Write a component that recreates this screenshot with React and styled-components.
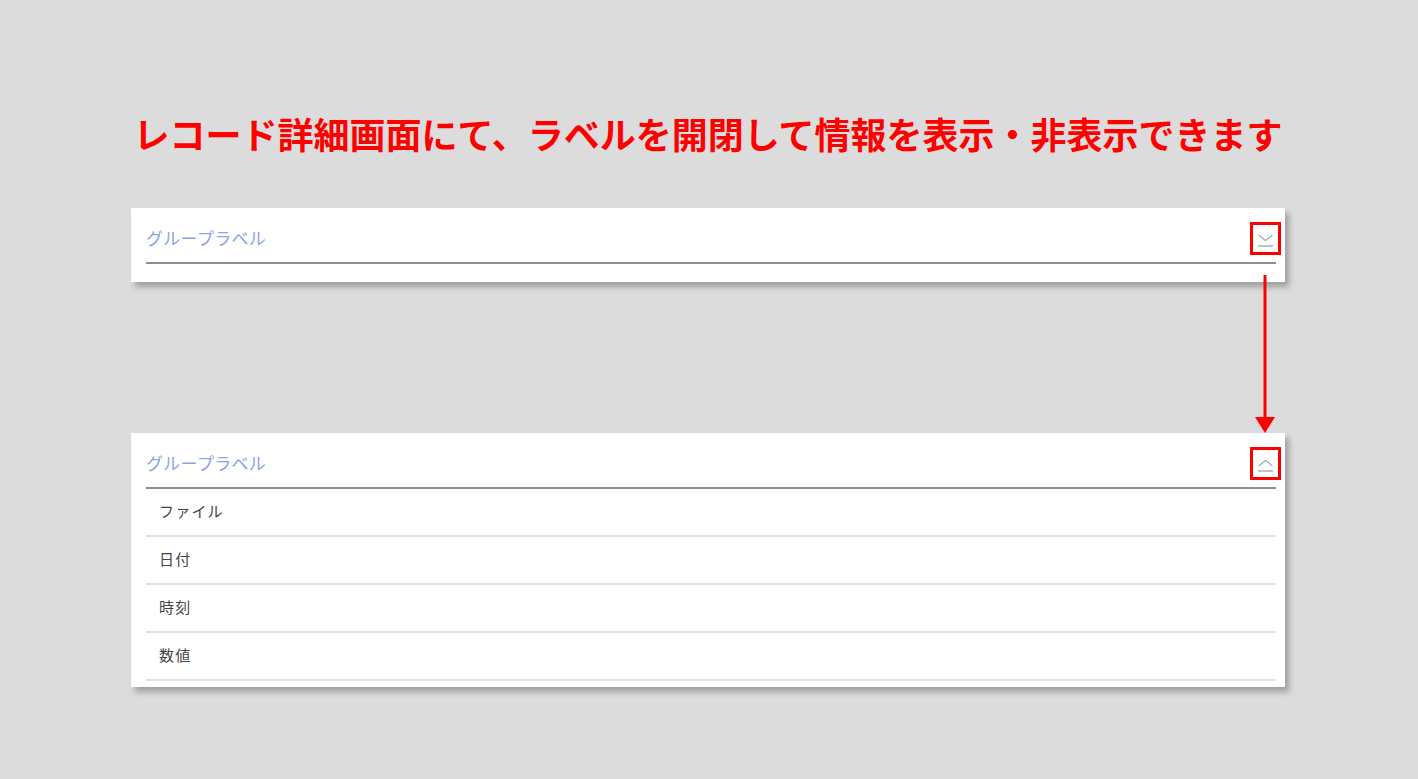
import React from 'react'
import styled, { createGlobalStyle } from 'styled-components'

const GlobalStyle = createGlobalStyle`
    html, body {
        margin: 0;
        padding: 0;
        background: #dcdcdc;
        font-family: "Noto Sans CJK JP", "Noto Sans", sans-serif;
    }
`;

const Page = styled.div`
    width: 1154px;
    margin-left: 131px;
    padding-top: 108px;
    padding-bottom: 80px;
`;

const Title = styled.h1`
    margin: 0 0 50px;
    height: 50px;
    line-height: 50px;
    text-align: center;
    color: #ff0000;
    font-size: 36px;
    font-weight: 700;
    white-space: nowrap;
`;

const Card = styled.section`
    background: #ffffff;
    box-shadow: 4px 5px 6px rgba(0, 0, 0, 0.28);
    padding: 6px 9px ${({ $open }) => ($open ? '6px' : '18px')} 15px;
`;

const Header = styled.div`
    display: flex;
    align-items: center;
    justify-content: space-between;
    height: 48px;
    border-bottom: 2px solid #8e8e8e;
`;

const Label = styled.span`
    color: #8aa4e2;
    font-size: 17px;
    letter-spacing: 0.3px;
    margin-top: -2px;
`;

const Toggle = styled.button`
    width: 31px;
    height: 33px;
    margin-right: -5px;
    padding: 3px 0 0;
    box-sizing: border-box;
    border: 3px solid #ff0000;
    background: transparent;
    display: flex;
    align-items: center;
    justify-content: center;
    cursor: pointer;
`;

const Row = styled.div`
    height: 48px;
    box-sizing: border-box;
    display: flex;
    align-items: center;
    padding: 0 0 4px 13px;
    border-bottom: 2px solid #e2e2e2;
    color: #444444;
    font-size: 15px;
    letter-spacing: 1.2px;
`;

const ArrowRow = styled.div`
    position: relative;
    height: 151px;
`;

const Arrow = styled.svg`
    position: absolute;
    right: 9px;
    top: -7px;
`;

function ChevronIcon({ up }) {
    return (
        <svg width="17" height="16" viewBox="0 0 17 16">
            {up
                ? <polyline points="1.5,9 8.5,3.5 15.5,9" fill="none" stroke="#a8a8a8" strokeWidth="1.2" />
                : <polyline points="1.5,3 8.5,8.5 15.5,3" fill="none" stroke="#a8a8a8" strokeWidth="1.2" />}
            <line x1="1" y1="14" x2="16" y2="14" stroke="#a8a8a8" strokeWidth="1.4" />
        </svg>
    )
}

function GroupCard({ open, items }) {
    return (
        <Card $open={open}>
            <Header>
                <Label>グループラベル</Label>
                <Toggle aria-label={open ? '閉じる' : '開く'}>
                    <ChevronIcon up={open} />
                </Toggle>
            </Header>
            {open && items.map(item => <Row key={item}>{item}</Row>)}
        </Card>
    )
}

export default function App() {
    return (
        <>
            <GlobalStyle />
            <Page>
                <Title>レコード詳細画面にて、ラベルを開閉して情報を表示・非表示できます</Title>
                <GroupCard open={false} />
                <ArrowRow>
                    <Arrow width="22" height="158" viewBox="0 0 22 158">
                        <rect x="9.5" y="0" width="3" height="144" fill="#ff0000" />
                        <polygon points="1,142 21,142 11,158" fill="#ff0000" />
                    </Arrow>
                </ArrowRow>
                <GroupCard open items={['ファイル', '日付', '時刻', '数値']} />
            </Page>
        </>
    )
}
